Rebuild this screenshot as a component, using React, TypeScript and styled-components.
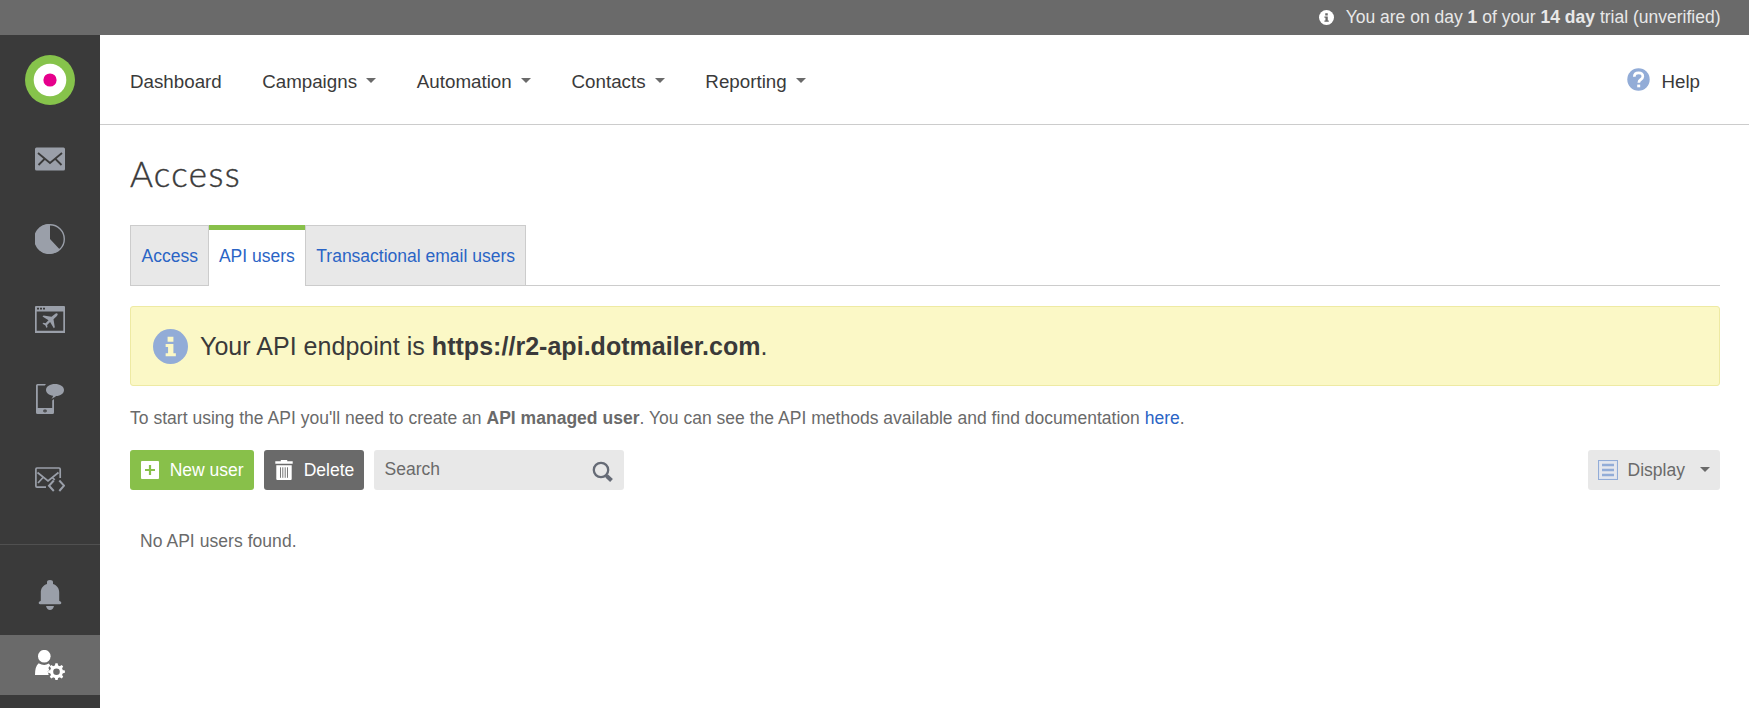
import React from "react";
import styled, { createGlobalStyle } from "styled-components";

const GlobalStyle = createGlobalStyle`
  * { box-sizing: border-box; }
  body {
    margin: 0;
    background: #fff;
    color: #6a6a6a;
    font: 17.5px/25px "Liberation Sans", Arial, sans-serif;
  }
  svg { display: block; flex: none; }
`;

const Page = styled.div`
  display: flex;
  flex-direction: column;
  height: 708px;
  overflow: hidden;
`;

const TrialBar = styled.div`
  display: flex;
  align-items: center;
  justify-content: flex-end;
  flex: none;
  gap: 11.5px;
  height: 35px;
  padding: 0 28.5px 1px 0;
  background: #6a6a6a;
  color: #e8e8e8;
`;

const Body = styled.div`
  display: flex;
  flex: 1;
  min-height: 0;
`;

const Sidebar = styled.aside`
  display: flex;
  flex-direction: column;
  flex: none;
  width: 100px;
  background: #3a3a3a;
`;

const Logo = styled.div`
  display: flex;
  justify-content: center;
  height: 84px;
  padding-top: 20px;
`;

const SideItem = styled.a<{ $active?: boolean }>`
  display: flex;
  align-items: center;
  justify-content: center;
  height: ${(p) => (p.$active ? 60 : 80)}px;
  background: ${(p) => (p.$active ? "#6a6a6a" : "transparent")};
  color: ${(p) => (p.$active ? "#fff" : "#9a9fa9")};
`;

const Divider = styled.div`
  height: 1px;
  margin: 25px 0 10px;
  background: #505050;
`;

const Main = styled.main`
  flex: 1;
  min-width: 0;
`;

const Header = styled.header`
  display: flex;
  justify-content: space-between;
  height: 90px;
  padding: 34px 49px 0 30px;
  border-bottom: 1px solid #ccc;
  color: #3a3a3a;
  font-size: 18.75px;
`;

const Nav = styled.nav`
  display: flex;
  gap: 40.45px;
`;

const NavItem = styled.a`
  display: flex;
  gap: 9.4px;
  color: #3a3a3a;
`;

const Caret = styled.span`
  width: 0;
  height: 0;
  margin-top: 9px;
  border: 5px solid transparent;
  border-top-color: #6a6a6a;
  border-bottom: 0;
`;

const Help = styled.a`
  display: flex;
  gap: 11px;

  svg {
    margin-top: -1px;
  }
`;

const Content = styled.div`
  padding: 27px 29px 0 30px;
`;

const Title = styled.h1`
  height: 73px;
  margin: 0;
  color: #3a3a3a;
  font: 300 35px/42px Lato, sans-serif;
  letter-spacing: 1.35px;
  -webkit-text-stroke: 0.4px #3a3a3a;
`;

const Tabs = styled.div`
  display: flex;
  height: 61px;
  border-bottom: 1px solid #ccc;
`;

const Tab = styled.a<{ $active?: boolean }>`
  height: 61px;
  padding: ${(p) => (p.$active ? "14px 10px 0" : "18px 10px 0 10.5px")};
  border: 1px solid #ccc;
  border-width: ${(p) => (p.$active ? "5px 0 0" : "1px")};
  border-top-color: ${(p) => (p.$active ? "#88c04a" : "#ccc")};
  background: ${(p) => (p.$active ? "#fff" : "#e8e8e8")};
  color: #2a64c5;
`;

const Notice = styled.div`
  display: flex;
  align-items: center;
  gap: 12.5px;
  height: 80px;
  margin-top: 20px;
  padding-left: 21.5px;
  border: 1px solid #eeeaa3;
  border-radius: 3px;
  background: #fbf8c6;
  color: #3a3a3a;
  font-size: 25px;
  letter-spacing: 0.03px;
`;

const Intro = styled.p`
  margin: 20px 0 19px;
  letter-spacing: 0.02px;
`;

const Link = styled.a`
  color: #2a64c5;
`;

const Toolbar = styled.div`
  display: flex;
  gap: 10px;
  height: 40px;
`;

const Button = styled.button<{ $bg: string; $color?: string; $width: number; $end?: boolean }>`
  display: flex;
  align-items: center;
  gap: ${(p) => (p.$end ? 9.5 : 10.7)}px;
  width: ${(p) => p.$width}px;
  margin-left: ${(p) => (p.$end ? "auto" : 0)};
  padding: 0 0 0 ${(p) => (p.$end ? 10 : 11)}px;
  border: 0;
  border-radius: 3px;
  background: ${(p) => p.$bg};
  color: ${(p) => p.$color ?? "#fff"};
  font: inherit;

  ${Caret} {
    margin: 0 0 1px 6px;
  }
`;

const SearchBox = styled.div`
  display: flex;
  justify-content: space-between;
  width: 250px;
  padding: 7px 11px 0 10.5px;
  border-radius: 3px;
  background: #e8e8e8;
`;

const SearchIconWrap = styled.span`
  padding-top: 4px;
`;

const Empty = styled.div`
  padding: 39px 10px;
  letter-spacing: 0.05px;
`;

const InfoIcon = ({ size, color, hole }: { size: number; color: string; hole: string }) => (
  <svg width={size} height={size} viewBox="0 0 36 36">
    <circle cx="18" cy="18" r="18" fill={color} />
    <path fill={hole} d="M15 8h6v5h-6zM13 15.5h8v9.5h2.500v3H13v-3h2.500v-6.500H13z" />
  </svg>
);

const MailIcon = () => (
  <svg width="30" height="24" viewBox="0 0 30 24">
    <rect y=".5" width="30" height="23" rx="1.5" fill="currentColor" />
    <path d="M3 6l12 10L27 6M3.500 18l6-6M26.500 18l-6-6" fill="none" stroke="#3a3a3a" strokeWidth="1.800" />
  </svg>
);

const PieIcon = () => (
  <svg width="30" height="30" viewBox="0 0 30 30">
    <circle cx="15" cy="15" r="14.300" fill="none" stroke="currentColor" strokeWidth="1.400" />
    <path d="M15 0v15l9.800 10.400A15 15 0 1 1 15 0z" fill="currentColor" />
  </svg>
);

const PlaneIcon = () => (
  <svg width="30" height="27" viewBox="0 0 30 27">
    <path fill="currentColor" fillRule="evenodd" d="M1 0h28a1 1 0 0 1 1 1v26H0V1a1 1 0 0 1 1-1zM1.700 5.500v19.300h26.600V5.500z" />
    <path d="M2 2.700h2M5 2.700h2M8 2.700h2" stroke="#3a3a3a" strokeWidth="1.700" />
    <path fill="currentColor" d="M22.300 7.600c.8.800.3 1.700-.4 2.400L18.500 13.300l1.300 8-1 1-3.700-6.200-3 3 .4 2-.9.900-1.400-2.800-2.700-1.500.9-.9 2.100.4 3-3-6-3.600 1-1.100 8 1.300L20 8c.7-.7 1.700-1 2.300-.4z" />
  </svg>
);

const PhoneIcon = () => (
  <svg width="30" height="30" viewBox="0 0 30 30">
    <path fill="currentColor" fillRule="evenodd" d="M2.500 0H11a9 9 0 0 0-1.200 1.500H2.800V24h14.400v-7.500L19 15v13.500a1.500 1.500 0 0 1-1.500 1.500h-15A1.500 1.500 0 0 1 1 28.500v-27A1.500 1.500 0 0 1 2.500 0z" />
    <ellipse cx="10" cy="27" rx="1.800" ry="1.400" fill="#3a3a3a" />
    <circle cx="10" cy="27" r=".6" fill="currentColor" />
    <path fill="currentColor" d="M20 0c5 0 9 2.500 9 6s-3.600 6-8 6.100c-1.300 1.300-2.600 2.100-4.600 2.600 1-.9 1.600-1.800 1.600-2.900C14 11.100 11 9 11 6c0-3.500 4-6 9-6z" />
  </svg>
);

const MailCodeIcon = () => (
  <svg width="30" height="25" viewBox="0 0 30 25" fill="none" stroke="currentColor" strokeWidth="1.700">
    <path d="M11 20.200H2A1.200 1.200 0 0 1 .9 19V2.200A1.200 1.200 0 0 1 2 1h22a1.200 1.200 0 0 1 1.200 1.200V11" />
    <path d="M2.500 5.500L13 14l10.500-8.500M3 16l5-5.500M17.300 10.600l2.500 2.200" />
    <path d="M18.800 13.500L14 18.700l4.800 5.300M24.300 13.500l4.700 5.200-4.700 5.300" strokeWidth="2" />
  </svg>
);

const BellIcon = () => (
  <svg width="24" height="30" viewBox="0 0 24 30" fill="currentColor">
    <path d="M9 2q0-2 3-2t3 2v1.900c4 1.300 6.200 4.300 6.200 8.600v8.300l2 1.200q.5 2.200-1.200 2.300H2Q.3 24.200.8 22l2-1.200v-8.300C2.800 8.200 5 5.200 9 3.900z" />
    <path d="M8 26h8q-1 4-4 4t-4-4z" />
  </svg>
);

const teeth = [0, 45, 90, 135, 180, 225, 270, 315];

const UserCogIcon = () => (
  <svg width="30" height="30" viewBox="0 0 30 30" fill="currentColor">
    <circle cx="9.300" cy="6.200" r="6.300" />
    <path d="M3.500 13.300q5.800 3.400 10.300.3l1.500 2-2 2.300 1 1.700-1.600 2 1 3.500H0q0-8.800 3.500-11.500z" />
    <circle cx="21.500" cy="21.700" r="4.900" fill="none" stroke="currentColor" strokeWidth="3.200" />
    {teeth.map((a) => (
      <path key={a} d="M19.800 16l.6-2.700h2.200l.6 2.700z" transform={`rotate(${a} 21.500 21.700)`} />
    ))}
  </svg>
);

const HelpIcon = () => (
  <svg width="23" height="23" viewBox="0 0 23 23">
    <circle cx="11.500" cy="11.500" r="11.200" fill="#92acd7" />
    <path d="M7.300 8.700Q7.300 4.900 11.600 4.900T15.800 8.500q0 1.700-2 3-2 1.200-2 3.200" fill="none" stroke="#fff" strokeWidth="2.700" />
    <path d="M10.200 16.600h3v2.700h-3z" fill="#fff" />
  </svg>
);

const PlusIcon = () => (
  <svg width="18" height="18" viewBox="0 0 18 18">
    <rect width="18" height="18" rx="1" fill="#fff" />
    <path d="M9 4v10M4 9h10" stroke="#88c04a" strokeWidth="2.200" />
  </svg>
);

const TrashIcon = () => (
  <svg width="18" height="20" viewBox="0 0 18 20">
    <path fill="#fff" d="M.3 1.200h5.500V0h6.400v1.200h5.500v2.500H.3zM1.300 5.200h15.400V19a1 1 0 0 1-1 1H2.300a1 1 0 0 1-1-1z" />
    <path d="M5.500 7.300v10.500M7.800 7.300v10.500M10.200 7.300v10.500M12.500 7.300v10.500" stroke="#6a6a6a" strokeWidth=".9" />
  </svg>
);

const SearchIcon = () => (
  <svg width="21" height="21" viewBox="0 0 21 21" fill="none" stroke="#666b76">
    <circle cx="9" cy="9" r="7.200" strokeWidth="2.300" />
    <path d="M13.700 14l1.500 1.500" strokeWidth="2.500" />
    <path d="M14.700 15l4.800 4.500" strokeWidth="4" />
  </svg>
);

const ListIcon = () => (
  <svg width="20" height="20" viewBox="0 0 20 20" stroke="#92acd7">
    <rect x=".5" y=".5" width="19" height="19" fill="#dde3ee" />
    <rect x="2" y="2" width="16" height="16" fill="#e5e7ed" stroke="none" />
    <path d="M4 5h12M4 10h12M4 15h12" strokeWidth="2.300" />
  </svg>
);

const sideIcons = [MailIcon, PieIcon, PlaneIcon, PhoneIcon, MailCodeIcon];
const menus = ["Campaigns", "Automation", "Contacts", "Reporting"];

export default function App() {
  return (
    <Page>
      <GlobalStyle />
      <TrialBar>
        <InfoIcon size={15} color="#fff" hole="#6a6a6a" />
        <span>
          You are on day <b>1</b> of your <b>14 day</b> trial (unverified)
        </span>
      </TrialBar>
      <Body>
        <Sidebar>
          <Logo>
            <svg width="50" height="50" viewBox="0 0 50 50">
              <circle cx="25" cy="25" r="25" fill="#86c34b" />
              <circle cx="25" cy="25" r="16.300" fill="#fff" />
              <circle cx="25" cy="25" r="6.600" fill="#e6008c" />
            </svg>
          </Logo>
          {sideIcons.map((Icon, i) => (
            <SideItem key={i}>
              <Icon />
            </SideItem>
          ))}
          <Divider />
          <SideItem>
            <BellIcon />
          </SideItem>
          <SideItem $active>
            <UserCogIcon />
          </SideItem>
        </Sidebar>
        <Main>
          <Header>
            <Nav>
              <NavItem>Dashboard</NavItem>
              {menus.map((label) => (
                <NavItem key={label}>
                  {label}
                  <Caret />
                </NavItem>
              ))}
            </Nav>
            <Help>
              <HelpIcon />
              Help
            </Help>
          </Header>
          <Content>
            <Title>Access</Title>
            <Tabs>
              <Tab>Access</Tab>
              <Tab $active>API users</Tab>
              <Tab>Transactional email users</Tab>
            </Tabs>
            <Notice>
              <InfoIcon size={35} color="#92acd7" hole="#fbf8c6" />
              <span>
                Your API endpoint is <b>https://r2-api.dotmailer.com</b>.
              </span>
            </Notice>
            <Intro>
              To start using the API you'll need to create an <b>API managed user</b>. You can see the API methods
              available and find documentation <Link>here</Link>.
            </Intro>
            <Toolbar>
              <Button $bg="#88c04a" $width={124}>
                <PlusIcon />
                New user
              </Button>
              <Button $bg="#6a6a6a" $width={100}>
                <TrashIcon />
                Delete
              </Button>
              <SearchBox>
                Search
                <SearchIconWrap>
                  <SearchIcon />
                </SearchIconWrap>
              </SearchBox>
              <Button $bg="#e8e8e8" $color="#6a6a6a" $width={132} $end>
                <ListIcon />
                Display
                <Caret />
              </Button>
            </Toolbar>
            <Empty>No API users found.</Empty>
          </Content>
        </Main>
      </Body>
    </Page>
  );
}
